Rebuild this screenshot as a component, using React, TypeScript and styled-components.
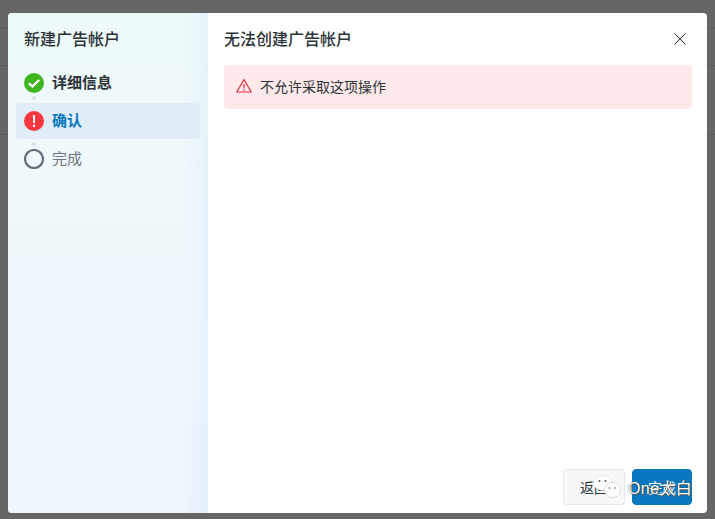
import styled, { createGlobalStyle } from "styled-components";

const GlobalStyle = createGlobalStyle`
  html, body {
    margin: 0;
    padding: 0;
  }
  body {
    font-family: "Liberation Sans", "Noto Sans CJK SC", sans-serif;
  }
`;

const Backdrop = styled.div`
  width: 715px;
  height: 519px;
  box-sizing: border-box;
  padding: 13px 8px 6px;
  position: relative;
  overflow: hidden;
  background-color: #666;
  background-image:
    linear-gradient(#5c5c5c, #5c5c5c),
    linear-gradient(#5c5c5c, #5c5c5c),
    linear-gradient(#5c5c5c, #5c5c5c);
  background-size: 100% 1px;
  background-repeat: no-repeat;
  background-position: 0 28px, 0 65px, 0 134px;
`;

const Modal = styled.div`
  display: flex;
  width: 699px;
  height: 500px;
  background: #fff;
  border-radius: 4px;
  overflow: hidden;
`;

const Sidebar = styled.aside`
  width: 200px;
  flex-shrink: 0;
  box-sizing: border-box;
  padding: 16px 8px;
  background:
    linear-gradient(90deg, rgba(220, 235, 248, 0) 88%, rgba(220, 235, 248, 0.55) 100%),
    linear-gradient(180deg, #eefafa 0%, #f0f8fc 40%, #eef6fe 100%);
`;

const SidebarTitle = styled.h2`
  margin: 0 0 14px 8px;
  font-size: 16px;
  line-height: 22px;
  font-weight: 500;
  color: #2c3338;
`;

const Steps = styled.ol`
  list-style: none;
  margin: 0;
  padding: 0;
  display: flex;
  flex-direction: column;
`;

const Step = styled.li<{ $active?: boolean }>`
  display: flex;
  align-items: center;
  gap: 8px;
  height: 36px;
  padding: 0 8px;
  border-radius: 4px;
  background: ${(p) => (p.$active ? "#e0ecf6" : "transparent")};
`;

const StepGap = styled.div`
  height: 2px;
  position: relative;
`;

const Dot = styled.span<{ $top: number }>`
  position: absolute;
  left: 16px;
  top: ${(p) => p.$top}px;
  width: 4px;
  height: 4px;
  border-radius: 50%;
  background: #d9dfe3;
`;

const StepLabel = styled.span<{ $color: string; $bold?: boolean }>`
  font-size: 15px;
  padding-bottom: 3px;
  font-weight: ${(p) => (p.$bold ? 700 : 400)};
  color: ${(p) => p.$color};
`;

const Main = styled.main`
  flex: 1;
  display: flex;
  flex-direction: column;
  padding: 16px 15px 8px 16px;
`;

const Header = styled.header`
  display: flex;
  align-items: center;
  justify-content: space-between;
  height: 22px;
  margin-bottom: 14px;
`;

const Title = styled.h1`
  margin: 0;
  font-size: 16px;
  line-height: 22px;
  font-weight: 500;
  color: #2c3338;
`;

const CloseButton = styled.button`
  border: 0;
  background: none;
  padding: 0;
  width: 12px;
  height: 12px;
  margin: 0 6px 2px 0;
  display: flex;
  color: #2c3338;
`;

const Alert = styled.div`
  display: flex;
  align-items: center;
  gap: 8px;
  height: 44px;
  padding: 0 12px 2px;
  box-sizing: border-box;
  border-radius: 4px;
  background: #ffe9ea;
  font-size: 14px;
  color: #2c3338;
`;

const Body = styled.div`
  flex: 1;
`;

const Footer = styled.footer`
  display: flex;
  justify-content: flex-end;
  gap: 7px;
`;

const Button = styled.button<{ $primary?: boolean }>`
  width: ${(p) => (p.$primary ? "60px" : "62px")};
  height: 36px;
  padding: 0;
  box-sizing: border-box;
  border-radius: 4px;
  font: inherit;
  font-size: 14px;
  color: ${(p) => (p.$primary ? "#fff" : "#2c3338")};
  background: ${(p) => (p.$primary ? "#0a78be" : "#f6f8fa")};
  border: 1px solid ${(p) => (p.$primary ? "#0a78be" : "#e4e8ec")};
`;

const Watermark = styled.div`
  position: absolute;
  left: 593px;
  top: 475px;
  display: flex;
  align-items: center;
  gap: 7px;
`;

const WatermarkText = styled.span`
  font-size: 16px;
  letter-spacing: 0.4px;
  color: #fff;
  text-shadow: 0 0 1px #333, 1px 1px 1px #555;
`;

function App() {
  return (
    <Backdrop>
      <GlobalStyle />
      <Modal>
        <Sidebar>
          <SidebarTitle>新建广告帐户</SidebarTitle>
          <Steps>
            <Step>
              <svg width="20" height="20" viewBox="0 0 20 20">
                <circle cx="10" cy="10" r="10" fill="#3fb51f" />
                <path d="M4.8 10.2l3.6 3.2L15.2 7" fill="none" stroke="#fff" strokeWidth="2.2" />
              </svg>
              <StepLabel $color="#2c3338" $bold>详细信息</StepLabel>
            </Step>
            <StepGap><Dot $top={-5} /></StepGap>
            <Step $active>
              <svg width="20" height="20" viewBox="0 0 20 20">
                <circle cx="10" cy="10" r="10" fill="#fb3640" />
                <rect x="9" y="4" width="2" height="8" fill="#fff" />
                <rect x="9" y="13.6" width="2" height="2.4" fill="#fff" />
              </svg>
              <StepLabel $color="#0a78be" $bold>确认</StepLabel>
            </Step>
            <StepGap><Dot $top={3} /></StepGap>
            <Step>
              <svg width="20" height="20" viewBox="0 0 20 20">
                <circle cx="10" cy="10" r="9" fill="none" stroke="#66707a" strokeWidth="2.2" />
              </svg>
              <StepLabel $color="#6d767e">完成</StepLabel>
            </Step>
          </Steps>
        </Sidebar>
        <Main>
          <Header>
            <Title>无法创建广告帐户</Title>
            <CloseButton aria-label="关闭">
              <svg width="12" height="12" viewBox="0 0 12 12">
                <path d="M.5.5l11 11M11.5.5l-11 11" stroke="currentColor" fill="none" />
              </svg>
            </CloseButton>
          </Header>
          <Alert>
            <svg width="16" height="16" viewBox="0 0 16 16">
              <path d="M8 1.5L15.2 14H.8z" fill="none" stroke="#e0293a" strokeWidth="1.2" strokeLinejoin="round" />
              <path d="M8 6v4.5M8 11.4v1.4" stroke="#e0293a" strokeWidth="1.2" />
            </svg>
            不允许采取这项操作
          </Alert>
          <Body />
          <Footer>
            <Button>返回</Button>
            <Button $primary>完成</Button>
          </Footer>
        </Main>
      </Modal>
      <Watermark>
        <svg width="28" height="24" viewBox="0 0 28 24">
          <ellipse cx="10" cy="8" rx="9.5" ry="7.5" fill="#fff" stroke="#d5d5d5" strokeWidth="0.6" />
          <ellipse cx="19.5" cy="15" rx="8" ry="7.5" fill="#fff" stroke="#aaa" strokeWidth="0.6" strokeDasharray="1.5 1" />
          <circle cx="6.5" cy="6" r="1" fill="#555" />
          <circle cx="12.5" cy="6" r="1" fill="#555" />
          <circle cx="16.5" cy="13" r="0.8" fill="#555" />
          <circle cx="22" cy="13" r="0.8" fill="#555" />
        </svg>
        <WatermarkText>One太白</WatermarkText>
      </Watermark>
    </Backdrop>
  );
}

export default App;
